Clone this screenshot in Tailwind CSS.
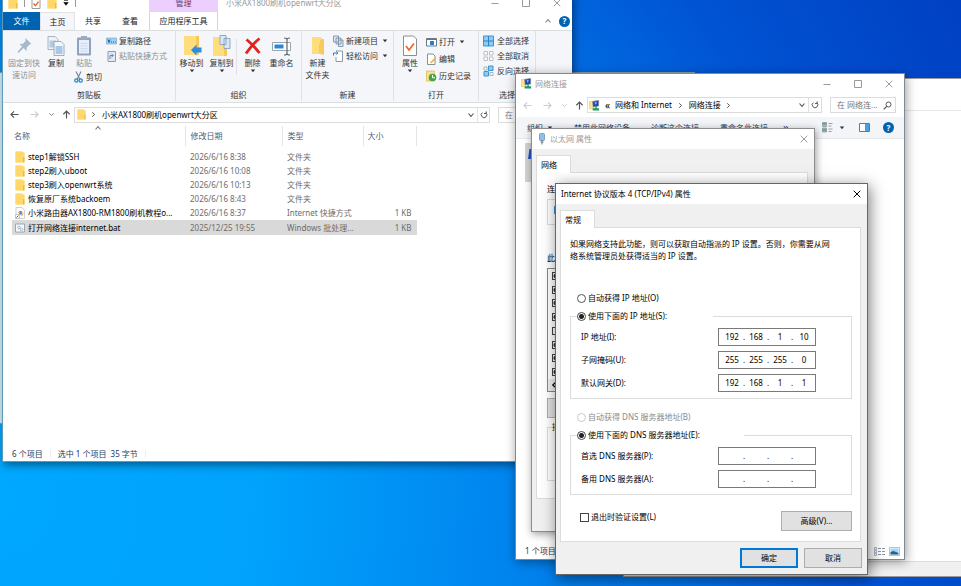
<!DOCTYPE html>
<html lang="zh-CN">
<head>
<meta charset="utf-8">
<meta name="viewport" content="width=device-width, initial-scale=1">
<title>网络连接</title>
<script src="https://cdn.jsdelivr.net/npm/@tailwindcss/browser@4"></script>
</head>
<body class="font-['Noto_Sans','Noto_Sans_CJK_SC',sans-serif] text-[8px] leading-[12px] text-black">

<!-- Shared icons -->
<svg class="hidden" aria-hidden="true">
  <symbol id="folder" viewBox="0 0 10 12"><path d="M0.5 0.5h6.5l1 1h1.5v10h-9z" fill="#ffe08a"/><path d="M7 0.5l1 1h1.5v4l-1.500 0v6h-7.500V0.500z" fill="#ffd76b"/><path d="M8 6h1.500v5.500h-1.500z" fill="#f2b93b"/></symbol>
  <symbol id="left" viewBox="0 0 10 10"><path d="M9.500 5H1.200M4.500 1.500L1 5l3.500 3.500" fill="none" stroke="currentColor" stroke-width="1.200"/></symbol>
  <symbol id="right" viewBox="0 0 10 10"><path d="M0.500 5h8.300M5.500 1.500L9 5 5.500 8.500" fill="none" stroke="currentColor" stroke-width="1.200"/></symbol>
  <symbol id="up" viewBox="0 0 10 10"><path d="M5 9.500V1.200M1.500 4.700L5 1.200l3.500 3.500" fill="none" stroke="currentColor" stroke-width="1.300"/></symbol>
  <symbol id="down" viewBox="0 0 8 8"><path d="M1.500 2.500L4 5.300l2.500-2.800" fill="none" stroke="currentColor" stroke-width="1.100"/></symbol>
  <symbol id="caret" viewBox="0 0 6 4"><path d="M0.800 0.500h4.400L3 3.300z" fill="currentColor"/></symbol>
  <symbol id="refresh" viewBox="0 0 10 10"><path d="M3 2a3.500 3.500 0 1 0 4.300.2M7.800 0.500v2.700H5" fill="none" stroke="currentColor" stroke-width="1.200"/></symbol>
  <symbol id="close" viewBox="0 0 8 8"><path d="M0.700 0.700l6.600 6.600M7.300 0.700L0.700 7.300" fill="none" stroke="currentColor" stroke-width="1"/></symbol>
  <symbol id="max" viewBox="0 0 8 8"><path d="M0.500 0.500h7v7h-7z" fill="none" stroke="currentColor"/></symbol>
  <symbol id="min" viewBox="0 0 8 8"><path d="M0.500 4.500h7" stroke="currentColor"/></symbol>
  <symbol id="net" viewBox="0 0 12 12"><path d="M0.500 1.500h5v8h-5z" fill="#ffe680" stroke="#d9bb4a" stroke-width=".5"/><path d="M4 1.500l6.500-1v6l-6 1z" fill="#2340b8" stroke="#7d8894" stroke-width=".8"/><path d="M6 2.500l2.500 0-1 3z" fill="#9fc4ff"/><path d="M7 7h1.500v2h2.500v2.500h-7V9h3z" fill="#1c9a63"/></symbol>
  <symbol id="copy" viewBox="0 0 18 21"><path d="M1 1h7l3 3v10H1z" fill="#eef3f8" stroke="#94a3b3" stroke-width=".8"/><path d="M2.500 5h6.500v7h-6.500z" fill="#b4cbe2"/><path d="M7 6h7l3 3v11H7z" fill="#f3f7fb" stroke="#8b9bab" stroke-width=".8"/><path d="M8.500 10.500h7v8h-7z" fill="#a9c8e8"/></symbol>
</svg>

<main class="relative h-screen w-full overflow-hidden bg-[radial-gradient(circle_at_0px_500px,#00a8ff_0px,#00a2fc_260px,#0088f0_480px,#0070e4_690px,#0054d4_850px,#0040c2_1080px)]">

  <!-- Windows at the back of the desktop -->
  <div class="absolute -left-2 top-[72px] h-[352px] w-[703px] border-t border-b border-[#8aa3ad] bg-[#d4ecf4]"></div>
  <div class="absolute top-[78px] -right-2 left-[623px] flex h-[499px] flex-col border border-[#9a9a9a] bg-white">
    <div class="h-8 border-b border-[#e6e6e6]"></div>
    <div class="flex-1"></div>
    <div class="h-[15px] border-t border-[#dcdcdc] bg-[#f0f0f0]"></div>
  </div>

  <!-- File explorer -->
  <section aria-label="文件资源管理器" class="absolute -top-[6px] left-[2px] flex h-[468px] w-[570px] flex-col border-b border-l border-[#5f9cbc] bg-white shadow-[2px_3px_8px_rgba(0,0,0,0.45)]">
    <header class="flex h-[18px] items-center text-[#9a9a9a]">
      <div class="flex w-[146px] items-center gap-[6px] pl-[5px]">
        <svg class="h-3 w-[10px]"><use href="#folder"/></svg>
        <span class="h-2 w-px bg-[#999]"></span>
        <svg class="h-3 w-[10px]" viewBox="0 0 10 12"><path d="M1 .5h8v11H1z" fill="#fff" stroke="#9a9a9a"/><path d="M2.500 6.500l2 2.200 3-4" fill="none" stroke="#e8642c" stroke-width="1.400"/></svg>
        <svg class="h-3 w-[10px]"><use href="#folder"/></svg>
        <svg class="h-[6px] w-[6px] text-black" viewBox="0 0 6 6"><path d="M1 .5h4M.8 2.500h4.400L3 5.300z" fill="currentColor" stroke="currentColor" stroke-width=".6"/></svg>
        <span class="h-2 w-px bg-[#999]"></span>
      </div>
      <div class="flex h-full w-[69px] items-center justify-center bg-[#eccffc] text-[#5f3d73]">管理</div>
      <h1 class="flex-1 pl-2">小米AX1800刷机openwrt大分区</h1>
      <button aria-label="最小化" class="flex w-[31px] justify-center"><svg class="h-2 w-2"><use href="#min"/></svg></button>
      <button aria-label="最大化" class="flex w-[31px] justify-center"><svg class="h-2 w-2"><use href="#max"/></svg></button>
      <button aria-label="关闭" class="flex w-[31px] justify-center"><svg class="h-2 w-2"><use href="#close"/></svg></button>
    </header>
    <nav class="flex h-[18px] items-stretch text-[#222]">
      <button class="w-[37px] bg-[#0063b1] text-white">文件</button>
      <button class="w-[35px] border-x border-t border-[#e1e3e5] bg-[#f4f6f9]">主页</button>
      <button class="w-9">共享</button>
      <button class="w-[38px]">查看</button>
      <button class="w-[69px] border-x border-[#d8d2dc]">应用程序工具</button>
      <span class="flex-1"></span>
      <button aria-label="折叠功能区" class="mr-[3px] flex w-4 items-center justify-center text-[#888]"><svg class="h-2 w-2 rotate-180"><use href="#down"/></svg></button>
      <button aria-label="帮助" class="mr-[2px] flex items-center"><span class="flex size-[11px] items-center justify-center rounded-full bg-[#0063b1] font-bold text-white">?</span></button>
    </nav>

    <!-- Ribbon -->
    <div class="flex h-[73px] border-y border-[#dcdfe2] bg-[#f4f6f9] pb-px text-[#333]">
      <div class="flex w-[173px] flex-col justify-between border-r border-[#dfe1e4]">
        <div class="flex pt-1 pl-[3px]">
          <button class="flex w-9 flex-col items-center text-[#8b8f94]"><svg class="h-[22px] w-[18px]" viewBox="0 0 18 22"><path d="M10.500 3l6 6-2 .6-2.700 2.900-.3 3.500-3-3L3.500 18l-1-1L7 11.500 4.500 9l3.600-.2L10.500 6z" fill="#a9b9cc"/></svg><span>固定到快<br>速访问</span></button>
          <button class="flex w-7 flex-col items-center"><svg class="h-[22px] w-[18px]"><use href="#copy"/></svg>复制</button>
          <div class="flex flex-col">
            <div class="flex">
              <button class="flex w-7 flex-col items-center text-[#8b8f94]"><svg class="h-[22px] w-[18px]" viewBox="0 0 18 22"><rect x="2" y="2.500" width="14" height="18" rx="1" fill="#8fa2c2"/><path d="M4 5h10v13.500H4z" fill="#e8effa"/><path d="M5.500 8.500h7M5.500 11h7M5.500 13.500h7M5.500 16h7" stroke="#c0d0e6" stroke-width=".7"/><path d="M6 1h6v3.500H6z" fill="#9eabc0"/></svg>粘贴</button>
              <div class="flex flex-col gap-[3px] pl-2">
                <button class="flex items-center gap-[2px]"><svg class="h-3 w-[11px]" viewBox="0 0 11 12"><path d="M.5 3h10v6H.5z" fill="#9fd0f3" stroke="#70a5cb" stroke-width=".6"/><path d="M2 4.500l1 3 1-3M5 7h1M7 7h1M9 7h.8" stroke="#175083" stroke-width=".9" fill="none"/></svg>复制路径</button>
                <button class="flex items-center gap-[2px] text-[#8b8f94]"><svg class="h-3 w-[11px]" viewBox="0 0 11 12"><path d="M2 1.500h7.500v10H2z" fill="#e4eaf4" stroke="#8b9cbb"/><path d="M4 9V5.500h3M5.500 4L7.500 5.500 5.500 7" fill="none" stroke="#7088b0"/></svg>粘贴快捷方式</button>
              </div>
            </div>
            <button class="flex items-center gap-[3px] pt-[2px] pl-1"><svg class="h-3 w-[9px]" viewBox="0 0 9 12"><path d="M2 .5l4 8M7 .5l-4 8" stroke="#718496" stroke-width="1.100"/><circle cx="2.300" cy="9.500" r="1.600" fill="none" stroke="#2786cf" stroke-width="1.300"/><circle cx="6.700" cy="9.500" r="1.600" fill="none" stroke="#2786cf" stroke-width="1.300"/></svg>剪切</button>
          </div>
        </div>
        <div class="text-center">剪贴板</div>
      </div>
      <div class="flex w-[126px] flex-col justify-between border-r border-[#dfe1e4]">
        <div class="flex pt-1">
          <button class="flex w-[31px] flex-col items-center"><svg class="h-[22px] w-5" viewBox="0 0 20 22"><path d="M2 1h15v19H2z" fill="#ffdc7c"/><path d="M14 1h3v19h-3z" fill="#f5c85a"/><path d="M19.500 12.500v5h-5v3L9 15l5.500-5.500v3z" fill="#2f8be0"/></svg>移动到<svg class="h-1 w-[6px]"><use href="#caret"/></svg></button>
          <button class="flex w-[29px] flex-col items-center"><svg class="h-[22px] w-5" viewBox="0 0 20 22"><path d="M1 2h14v19H1z" fill="#ffdc7c"/><path d="M12 2h3v19h-3z" fill="#f5c85a"/><path d="M8 .5h6v9H8zM12 3.500h6v10h-6z" fill="#d7e8f8" stroke="#8099b0" stroke-width=".8"/></svg>复制到<svg class="h-1 w-[6px]"><use href="#caret"/></svg></button>
          <span class="mt-1 h-9 w-px bg-[#dfe1e4]"></span>
          <button class="flex w-[31px] flex-col items-center"><svg class="h-[22px] w-5" viewBox="0 0 20 22"><path d="M3.500 4.500c5 4 9 8.500 13 13.500M16.500 3.500C12 7 7.500 12 3 18.500" fill="none" stroke="#e0231c" stroke-width="2.800"/></svg>删除<svg class="h-1 w-[6px]"><use href="#caret"/></svg></button>
          <button class="flex w-[27px] flex-col items-center"><svg class="h-[22px] w-5" viewBox="0 0 20 22"><path d="M.5 7.500h18v8H.5z" fill="#fff" stroke="#9aa5af"/><path d="M2.500 9.500h9v4h-9z" fill="#2b88d8"/><path d="M12 3c2 0 3 .4 3 1.500v14c0 1-1 1.500-3 1.500M18 3c-2 0-3 .4-3 1.500v14c0 1 1 1.500 3 1.500" fill="none" stroke="#5c6770" stroke-width="1.200"/></svg>重命名</button>
        </div>
        <div class="text-center">组织</div>
      </div>
      <div class="flex w-[92px] flex-col justify-between border-r border-[#dfe1e4]">
        <div class="flex pt-1">
          <button class="flex w-[31px] flex-col items-center"><svg class="h-[22px] w-4" viewBox="0 0 16 22"><path d="M2 2h9l1 2h2v16l-4-1H2z" fill="#ffdc7c"/><path d="M11 4h3v16l-5-2V10z" fill="#f6cb5c"/></svg><span>新建<br>文件夹</span></button>
          <div class="flex flex-col gap-[3px]">
            <button class="flex items-center gap-[2px]"><svg class="h-3 w-[11px]" viewBox="0 0 11 12"><path d="M.5 1h5v6h-5zM3 3h5v6H3zM5.500 5H10v6.500H5.500z" fill="#dbeaf7" stroke="#71879c" stroke-width=".8"/></svg>新建项目<svg class="ml-[2px] h-1 w-[6px]"><use href="#caret"/></svg></button>
            <button class="flex items-center gap-[2px]"><svg class="h-3 w-[11px]" viewBox="0 0 11 12"><path d="M3 1h6.500v10.500H3V7" fill="#fff" stroke="#7f8e9c" stroke-width=".9"/><path d="M.5 5.500V3h4M3.300 1.500L5 3 3.300 4.500" fill="none" stroke="#2480ca"/></svg>轻松访问<svg class="ml-[2px] h-1 w-[6px]"><use href="#caret"/></svg></button>
          </div>
        </div>
        <div class="text-center">新建</div>
      </div>
      <div class="flex w-[85px] flex-col justify-between border-r border-[#dfe1e4]">
        <div class="flex pt-1">
          <button class="flex w-8 flex-col items-center"><svg class="h-[22px] w-4" viewBox="0 0 16 22"><path d="M1.500 1h10l3 3v16.500h-13z" fill="#fff" stroke="#8a8f94"/><path d="M4 11l3 4 5-6.500" fill="none" stroke="#ee6c2b" stroke-width="1.800"/></svg>属性<svg class="h-1 w-[6px]"><use href="#caret"/></svg></button>
          <div class="flex flex-col gap-[5px] pt-px">
            <button class="flex items-center gap-[2px]"><svg class="h-3 w-[11px]" viewBox="0 0 11 12"><path d="M.5 2.500h10v7.500H.5z" fill="#fff" stroke="#6b7884"/><path d="M1 2.500h9v1.500H1z" fill="#6b7884"/><path d="M4 5h4v4H4z" fill="#2480ca"/></svg>打开<svg class="ml-[2px] h-1 w-[6px]"><use href="#caret"/></svg></button>
            <button class="flex items-center gap-[2px]"><svg class="h-3 w-[11px]" viewBox="0 0 11 12"><path d="M1.500 1h5.500l2 2v8.500H1.500z" fill="#fff" stroke="#8a8f94"/><path d="M4 9.500l5-5 1 1.500-5 4.500z" fill="#f3b13a"/></svg>编辑</button>
            <button class="flex items-center gap-[2px]"><svg class="h-3 w-[11px]" viewBox="0 0 11 12"><path d="M.5 1h8v10h-8z" fill="#ffe08a" stroke="#d7ac3c" stroke-width=".6"/><circle cx="6.500" cy="7.500" r="3.800" fill="#47a44b"/><path d="M6.500 5v2.700H9" fill="none" stroke="#fff"/></svg>历史记录</button>
          </div>
        </div>
        <div class="text-center">打开</div>
      </div>
      <div class="flex w-[57px] flex-col justify-between border-r border-[#dfe1e4]">
        <div class="flex flex-col gap-[3px] pt-1 pl-1">
          <button class="flex items-center gap-[3px]"><svg class="h-3 w-[11px]" viewBox="0 0 11 12"><path d="M.5 1h10v10H.5z" fill="#8dccf6" stroke="#3d94d0"/><path d="M5.500 1v10M.5 6h10" stroke="#2f83bf"/></svg>全部选择</button>
          <button class="flex items-center gap-[3px]"><svg class="h-3 w-[11px]" viewBox="0 0 11 12"><path d="M1 1.500h3.500V5H1zM6.500 1.500H10V5H6.500zM1 7h3.500v3.500H1zM6.500 7H10v3.500H6.500z" fill="#fff" stroke="#aab0b6" stroke-width=".8"/></svg>全部取消</button>
          <button class="flex items-center gap-[3px]"><svg class="h-3 w-[11px]" viewBox="0 0 11 12"><path d="M5.500 1H10v4.500H5.500zM1 6.500h4.500V11H1z" fill="#8dccf6" stroke="#3d94d0"/><path d="M1 2h3v3H1zM7 7.500h3v3H7z" fill="#fff" stroke="#8fa4b5" stroke-width=".8"/></svg>反向选择</button>
        </div>
        <div class="text-center">选择</div>
      </div>
    </div>

    <!-- Address bar -->
    <div class="flex h-[23px] items-center text-[#555]">
      <button aria-label="后退" class="flex w-[23px] justify-center"><svg class="size-[9px]"><use href="#left"/></svg></button>
      <button aria-label="前进" class="flex w-[17px] justify-center text-[#ccc]"><svg class="size-[9px]"><use href="#right"/></svg></button>
      <button aria-label="最近" class="flex w-4 justify-center text-[#888]"><svg class="size-[7px]"><use href="#down"/></svg></button>
      <button aria-label="上移" class="flex w-[15px] justify-center"><svg class="size-[9px]"><use href="#up"/></svg></button>
      <div class="flex h-4 w-[416px] items-center border border-[#dcdcdc] pl-[2px]">
        <svg class="h-[11px] w-[9px]"><use href="#folder"/></svg>
        <svg class="ml-1 size-[7px] -rotate-90"><use href="#down"/></svg>
        <span class="flex-1 pl-[5px] text-black">小米AX1800刷机openwrt大分区</span>
        <button aria-label="历史" class="flex w-3 justify-center"><svg class="size-2"><use href="#down"/></svg></button>
        <button aria-label="刷新" class="flex h-full w-3 items-center justify-center border-l border-[#e3e3e3]"><svg class="size-2"><use href="#refresh"/></svg></button>
      </div>
      <input aria-label="搜索" placeholder="在" class="ml-2 h-4 w-[68px] border border-[#dcdcdc] pl-[6px] placeholder:text-[#777]">
    </div>

    <div class="flex-1 pl-[9px]">
      <table class="w-[405px] table-fixed text-left text-[#6d6d6d]">
        <thead>
          <tr class="h-[20px] text-[#4c607a]">
            <th class="relative w-[173px] border-r border-[#e5e5e5] pl-[2px] font-normal">名称<svg class="absolute -top-[2px] left-[82px] size-2 rotate-180 text-[#777]"><use href="#down"/></svg></th>
            <th class="w-[97px] border-r border-[#e5e5e5] pl-[5px] font-normal">修改日期</th>
            <th class="w-[81px] border-r border-[#e5e5e5] pl-[5px] font-normal">类型</th>
            <th class="border-r border-[#e5e5e5] pl-1 font-normal">大小</th>
          </tr>
        </thead>
        <tbody>
          <tr class="h-1"><td colspan="4"></td></tr>
          <tr class="h-[14px]"><td class="text-black"><div class="flex items-center gap-[3px] pl-[3px]"><svg class="h-3 w-[10px]"><use href="#folder"/></svg>step1解锁SSH</div></td><td class="pl-[5px]">2026/6/16 8:38</td><td class="pl-[5px]">文件夹</td><td></td></tr>
          <tr class="h-[14px]"><td class="text-black"><div class="flex items-center gap-[3px] pl-[3px]"><svg class="h-3 w-[10px]"><use href="#folder"/></svg>step2刷入uboot</div></td><td class="pl-[5px]">2026/6/16 10:08</td><td class="pl-[5px]">文件夹</td><td></td></tr>
          <tr class="h-[14px]"><td class="text-black"><div class="flex items-center gap-[3px] pl-[3px]"><svg class="h-3 w-[10px]"><use href="#folder"/></svg>step3刷入openwrt系统</div></td><td class="pl-[5px]">2026/6/16 10:13</td><td class="pl-[5px]">文件夹</td><td></td></tr>
          <tr class="h-[14px]"><td class="text-black"><div class="flex items-center gap-[3px] pl-[3px]"><svg class="h-3 w-[10px]"><use href="#folder"/></svg>恢复原厂系统backoem</div></td><td class="pl-[5px]">2026/6/16 8:43</td><td class="pl-[5px]">文件夹</td><td></td></tr>
          <tr class="h-[14px]"><td class="text-black"><div class="flex items-center gap-[3px] pl-[3px]"><svg class="h-3 w-[10px]" viewBox="0 0 10 12"><path d="M1 .5h6l2.500 2.500v8.500H1z" fill="#fff" stroke="#bbb" stroke-width=".7"/><path d="M3 5.500A2.800 2.800 0 0 1 8 5.500z" fill="#e5482c"/><path d="M8.200 5.500a2.700 2.700 0 0 1-2.500 3.800z" fill="#f2b52c"/><circle cx="5.600" cy="6.500" r="1.300" fill="#3b82e0"/><path d="M.5 7.500h4V11.500h-4z" fill="#fff" stroke="#999" stroke-width=".5"/><path d="M1.500 10.500L3.500 8.500" stroke="#2062c8"/></svg>小米路由器AX1800-RM1800刷机教程o...</div></td><td class="pl-[5px]">2026/6/16 8:37</td><td class="pl-[5px]">Internet 快捷方式</td><td class="pr-[5px] text-right">1 KB</td></tr>
          <tr class="h-[15px] bg-[#d9d9d9]"><td class="text-black"><div class="flex items-center gap-[3px] pl-[3px]"><svg class="h-3 w-[10px]" viewBox="0 0 10 12"><path d="M.5 2h9v8h-9z" fill="#f5f8fa" stroke="#8b98a4" stroke-width=".8"/><circle cx="4" cy="5.500" r="1.300" fill="none" stroke="#a9b8c6"/><circle cx="6.500" cy="7.500" r="1.300" fill="none" stroke="#a9b8c6"/></svg>打开网络连接internet.bat</div></td><td class="pl-[5px]">2025/12/25 19:55</td><td class="pl-[5px]">Windows 批处理...</td><td class="pr-[5px] text-right">1 KB</td></tr>
        </tbody>
      </table>
    </div>
    <footer class="flex h-[15px] items-center gap-[7px] pl-[9px] text-[#24405e]"><span>6 个项目</span><span class="h-2 w-px bg-[#eee]"></span><span>选中 1 个项目&nbsp; 35 字节</span><span class="h-2 w-px bg-[#eee]"></span></footer>
  </section>

  <!-- Network connections -->
  <section aria-label="网络连接" class="absolute top-[73px] left-[515px] flex h-[487px] w-[390px] flex-col border border-[#7d8a94] bg-white shadow-[1px_2px_10px_rgba(0,0,0,0.4)]">
    <header class="flex h-[19px] items-center text-[#999]">
      <svg class="ml-[5px] size-[11px]"><use href="#net"/></svg>
      <h2 class="flex-1 pl-[3px]">网络连接</h2>
      <button aria-label="最小化" class="flex w-[30px] justify-center"><svg class="h-2 w-2"><use href="#min"/></svg></button>
      <button aria-label="最大化" class="flex w-[31px] justify-center"><svg class="h-2 w-2"><use href="#max"/></svg></button>
      <button aria-label="关闭" class="flex w-[31px] justify-center"><svg class="h-2 w-2"><use href="#close"/></svg></button>
    </header>
    <div class="flex h-[24px] items-center pr-2 text-[#555]">
      <button aria-label="后退" class="flex w-[23px] justify-center text-[#ccc]"><svg class="size-[9px]"><use href="#left"/></svg></button>
      <button aria-label="前进" class="flex w-[17px] justify-center text-[#ccc]"><svg class="size-[9px]"><use href="#right"/></svg></button>
      <button aria-label="最近" class="flex w-4 justify-center text-[#ccc]"><svg class="size-[7px]"><use href="#down"/></svg></button>
      <button aria-label="上移" class="flex w-[15px] justify-center"><svg class="size-[9px]"><use href="#up"/></svg></button>
      <div class="flex h-4 flex-1 items-center border border-[#dcdcdc] pl-px">
        <svg class="size-[11px]"><use href="#net"/></svg>
        <span class="w-[15px] text-center text-[10px] text-black">«</span>
        <span class="text-black">网络和 Internet</span><svg class="mx-[5px] size-[7px] -rotate-90"><use href="#down"/></svg>
        <span class="text-black">网络连接</span><svg class="mx-1 size-[7px] -rotate-90"><use href="#down"/></svg>
        <span class="flex-1"></span>
        <button aria-label="历史" class="flex w-[13px] justify-center"><svg class="size-2"><use href="#down"/></svg></button>
        <button aria-label="刷新" class="flex h-full w-[13px] items-center justify-center border-l border-[#e3e3e3]"><svg class="size-2"><use href="#refresh"/></svg></button>
      </div>
      <label class="ml-2 flex h-4 w-[66px] items-center border border-[#dcdcdc] pl-[6px]"><input aria-label="搜索" placeholder="在 网络连..." class="w-[46px] placeholder:text-[#777]"><svg class="size-[9px]" viewBox="0 0 9 9"><circle cx="5.500" cy="3.500" r="2.500" fill="none" stroke="#555"/><path d="M3.700 5.300L.7 8.300" stroke="#555" stroke-width="1.200"/></svg></label>
    </div>
    <div class="flex h-[22px] items-center border-b border-[#e4e7ea] bg-[#f3f5f8] pl-[11px] text-[#1e395b]">
      <button class="flex items-center gap-1">组织<svg class="h-1 w-[6px]"><use href="#caret"/></svg></button>
      <button class="ml-[21px]">禁用此网络设备</button>
      <button class="ml-[21px]">诊断这个连接</button>
      <button class="ml-[21px]">重命名此连接</button>
      <button class="ml-[15px] text-[12px]">»</button>
      <span class="flex-1"></span>
      <button aria-label="更改视图" class="flex items-center gap-[6px]"><svg class="size-[11px]" viewBox="0 0 11 11"><path d="M.5.500h4v4h-4zM.5 6h4v4h-4z" fill="#9fd0a0" stroke="#7d8b98" stroke-width=".7"/><path d="M1 2h3M1 8h3" stroke="#3a76b4"/><path d="M6.500 1.500h4M6.500 4h3M6.500 7h4M6.500 9.500h3" stroke="#8a97a3" stroke-width=".9"/></svg><svg class="h-1 w-[6px]"><use href="#caret"/></svg></button>
      <button aria-label="预览窗格" class="ml-[14px]"><svg class="h-[9px] w-[11px]" viewBox="0 0 11 9"><path d="M.5.500h10v8H.5z" fill="#fff" stroke="#6a7885"/><path d="M6 1h4v7H6z" fill="#4a9fe0"/></svg></button>
      <button aria-label="帮助" class="mr-[10px] ml-[13px] flex size-[11px] items-center justify-center rounded-full bg-[#0063b1] font-bold text-white">?</button>
    </div>
    <div class="flex-1 pt-[4px] pl-[9px]">
      <div class="h-[39px] w-20 bg-[#d4d4d4] pt-[6px] pl-[3px]"><svg class="h-3 w-4" viewBox="0 0 16 12"><path d="M1.500 0h12v10H0z" fill="#2450c8"/></svg></div>
    </div>
    <footer class="flex h-4 items-center gap-1 pr-1 pl-[9px] text-[#24405e]"><span class="flex-1">1 个项目</span>
      <button aria-label="详细信息"><svg class="h-[9px] w-[11px]" viewBox="0 0 11 9"><path d="M.5.500h2v2h-2zM.5 3.500h2v2h-2zM.5 6.500h2v2h-2z" fill="none" stroke="#8a97a3" stroke-width=".7"/><path d="M4 1.500h3M8 1.500h3M4 4.500h3M8 4.500h3M4 7.500h3M8 7.500h3" stroke="#8a97a3"/></svg></button>
      <button aria-label="大图标" class="border border-[#9ccbe8] bg-white"><svg class="h-[7px] w-[9px]" viewBox="0 0 9 7"><path d="M.5.500h8v6h-8z" fill="#9fd4f5"/><path d="M.5 6.500V4l3-1 5 2v1.500z" fill="#24638c"/></svg></button>
    </footer>
  </section>

  <!-- Ethernet properties -->
  <section aria-label="以太网 属性" class="absolute top-[128px] left-[531px] flex h-[404px] w-[284px] flex-col border border-[#8d8d8d] bg-[#f0f0f0] shadow-[1px_2px_8px_rgba(0,0,0,0.4)]">
    <header class="flex h-5 items-center bg-white text-[#999]">
      <svg class="ml-[6px] h-3 w-2" viewBox="0 0 8 12"><rect x="1.500" y=".5" width="5" height="7" rx="1" fill="#8ec1e8" stroke="#5d88a8" stroke-width=".7"/><path d="M4 7v4.500M2.500 9h3" stroke="#6d7c88"/></svg>
      <h2 class="flex-1 pl-1">以太网 属性</h2>
      <button aria-label="关闭" class="mr-[6px]"><svg class="h-2 w-2"><use href="#close"/></svg></button>
    </header>
    <div class="flex flex-1 flex-col pt-[6px] pr-[6px] pb-8 pl-1">
      <button class="z-10 -mb-px h-[18px] w-[35px] border border-b-0 border-[#dcdcdc] bg-white pl-1 text-left">网络</button>
      <div class="flex flex-1 flex-col border border-[#dcdcdc] bg-white px-[10px] pt-[10px]">
        <div>连</div>
        <div class="mt-1 h-[26px] shrink-0 border border-[#dcdcdc] pt-[6px] pl-[6px]"><div class="h-2 w-2 bg-[#398ec4]"></div></div>
        <div class="mt-[27px]">此</div>
        <div class="mt-1 flex h-[124px] shrink-0 flex-col border border-[#888] pl-1">
          <div class="flex flex-1 flex-col justify-around">
            <input type="checkbox" aria-label="项目 1" checked class="size-2 appearance-none border border-[#444] bg-white checked:bg-[radial-gradient(circle,#333_0_2px,#fff_3px)]">
            <input type="checkbox" aria-label="项目 2" checked class="size-2 appearance-none border border-[#444] bg-white checked:bg-[radial-gradient(circle,#333_0_2px,#fff_3px)]">
            <input type="checkbox" aria-label="项目 3" checked class="size-2 appearance-none border border-[#444] bg-white checked:bg-[radial-gradient(circle,#333_0_2px,#fff_3px)]">
            <input type="checkbox" aria-label="项目 4" checked class="size-2 appearance-none border border-[#444] bg-white checked:bg-[radial-gradient(circle,#333_0_2px,#fff_3px)]">
            <input type="checkbox" aria-label="项目 5" class="size-2 appearance-none border border-[#444] bg-white checked:bg-[radial-gradient(circle,#333_0_2px,#fff_3px)]">
            <input type="checkbox" aria-label="项目 6" checked class="size-2 appearance-none border border-[#444] bg-white checked:bg-[radial-gradient(circle,#333_0_2px,#fff_3px)]">
            <input type="checkbox" aria-label="项目 7" checked class="size-2 appearance-none border border-[#444] bg-white checked:bg-[radial-gradient(circle,#333_0_2px,#fff_3px)]">
            <input type="checkbox" aria-label="项目 8" checked class="size-2 appearance-none border border-[#444] bg-white checked:bg-[radial-gradient(circle,#333_0_2px,#fff_3px)]">
          </div>
          <div class="-ml-1 h-3 bg-[#eee] pt-[2px] pl-[2px]"><svg class="size-2 rotate-90"><use href="#down"/></svg></div>
        </div>
        <button aria-label="安装" class="mt-[6px] h-5 w-16 shrink-0 border border-[#adadad] bg-[#e1e1e1]"></button>
        <fieldset class="mt-[3px] h-[60px] border border-[#dcdcdc]"><legend class="ml-1">描</legend></fieldset>
      </div>
    </div>
  </section>

  <!-- IPv4 properties -->
  <form aria-label="Internet 协议版本 4 (TCP/IPv4) 属性" class="absolute top-[183px] left-[555px] flex h-[392px] w-[313px] flex-col border border-[#666] bg-[#f0f0f0] shadow-[2px_3px_14px_rgba(0,0,0,0.5)]">
    <header class="flex h-[20px] shrink-0 items-center bg-white pr-[6px] pl-[5px]">
      <h2 class="flex-1">Internet 协议版本 4 (TCP/IPv4) 属性</h2>
      <button type="button" aria-label="关闭"><svg class="h-2 w-2"><use href="#close"/></svg></button>
    </header>
    <div class="flex flex-1 flex-col pt-[6px] pr-[6px] pl-1">
      <button type="button" class="z-10 -mb-px h-[18px] w-[35px] border border-b-0 border-[#dcdcdc] bg-white pl-1 text-left">常规</button>
      <div class="flex flex-1 flex-col border border-[#dcdcdc] bg-white pt-[10px] pr-2 pl-[9px]">
        <p>如果网络支持此功能，则可以获取自动指派的 IP 设置。否则，你需要从网<br>络系统管理员处获得适当的 IP 设置。</p>

        <label class="mt-[30px] ml-[7px] flex items-center gap-[2px]"><input type="radio" name="ip" class="size-[9px] appearance-none rounded-full border border-[#555] bg-white">自动获得 IP 地址(O)</label>
        <fieldset class="mt-[6px] border border-[#dcdcdc] pb-[6px] pl-[10px]">
          <legend class="-ml-1 w-[136px]"><label class="flex items-center gap-[2px]"><input type="radio" name="ip" checked class="size-[9px] appearance-none rounded-full border border-[#444] bg-[radial-gradient(circle,#222_0_2px,#fff_3px)]">使用下面的 IP 地址(S):</label></legend>
          <div class="flex flex-col gap-[5px] pt-[6px]">
            <div class="flex items-center"><label for="ip1" class="w-[137px]">IP 地址(I):</label>
              <div class="flex h-[18px] w-[98px] items-center border border-[#7a7a7a] pl-[3px]"><input id="ip1" value="192" class="w-5 text-center"><span class="w-1 text-center">.</span><input aria-label="IP 2" value="168" class="w-5 text-center"><span class="w-1 text-center">.</span><input aria-label="IP 3" value="1" class="w-5 text-center"><span class="w-1 text-center">.</span><input aria-label="IP 4" value="10" class="w-5 text-center"></div></div>
            <div class="flex items-center"><label for="mask1" class="w-[137px]">子网掩码(U):</label>
              <div class="flex h-[18px] w-[98px] items-center border border-[#7a7a7a] pl-[3px]"><input id="mask1" value="255" class="w-5 text-center"><span class="w-1 text-center">.</span><input aria-label="掩码 2" value="255" class="w-5 text-center"><span class="w-1 text-center">.</span><input aria-label="掩码 3" value="255" class="w-5 text-center"><span class="w-1 text-center">.</span><input aria-label="掩码 4" value="0" class="w-5 text-center"></div></div>
            <div class="flex items-center"><label for="gw1" class="w-[137px]">默认网关(D):</label>
              <div class="flex h-[18px] w-[98px] items-center border border-[#7a7a7a] pl-[3px]"><input id="gw1" value="192" class="w-5 text-center"><span class="w-1 text-center">.</span><input aria-label="网关 2" value="168" class="w-5 text-center"><span class="w-1 text-center">.</span><input aria-label="网关 3" value="1" class="w-5 text-center"><span class="w-1 text-center">.</span><input aria-label="网关 4" value="1" class="w-5 text-center"></div></div>
          </div>
        </fieldset>

        <label class="mt-[12px] ml-[7px] flex items-center gap-[2px] text-[#8a8a8a]"><input type="radio" name="dns" disabled class="size-[9px] appearance-none rounded-full border border-[#c8c8c8] bg-white">自动获得 DNS 服务器地址(B)</label>
        <fieldset class="mt-[6px] border border-[#dcdcdc] pb-[6px] pl-[10px]">
          <legend class="-ml-1 w-[167px]"><label class="flex items-center gap-[2px]"><input type="radio" name="dns" checked class="size-[9px] appearance-none rounded-full border border-[#444] bg-[radial-gradient(circle,#222_0_2px,#fff_3px)]">使用下面的 DNS 服务器地址(E):</label></legend>
          <div class="flex flex-col gap-[5px] pt-[6px]">
            <div class="flex items-center"><label for="dns1" class="w-[137px]">首选 DNS 服务器(P):</label>
              <div class="flex h-[18px] w-[98px] items-center border border-[#7a7a7a] pl-[3px]"><input id="dns1" class="w-5 text-center"><span class="w-1 text-center">.</span><input aria-label="首选 2" class="w-5 text-center"><span class="w-1 text-center">.</span><input aria-label="首选 3" class="w-5 text-center"><span class="w-1 text-center">.</span><input aria-label="首选 4" class="w-5 text-center"></div></div>
            <div class="flex items-center"><label for="dns2" class="w-[137px]">备用 DNS 服务器(A):</label>
              <div class="flex h-[18px] w-[98px] items-center border border-[#7a7a7a] pl-[3px]"><input id="dns2" class="w-5 text-center"><span class="w-1 text-center">.</span><input aria-label="备用 2" class="w-5 text-center"><span class="w-1 text-center">.</span><input aria-label="备用 3" class="w-5 text-center"><span class="w-1 text-center">.</span><input aria-label="备用 4" class="w-5 text-center"></div></div>
          </div>
        </fieldset>

        <div class="mt-[16px] flex items-start justify-between">
          <label class="ml-[10px] flex items-center gap-[2px]"><input type="checkbox" class="size-[9px] appearance-none border border-[#444] bg-white">退出时验证设置(L)</label>
          <button type="button" class="h-5 w-[71px] border border-[#adadad] bg-[#e1e1e1]">高级(V)...</button>
        </div>
      </div>
    </div>
    <footer class="flex h-8 shrink-0 items-start justify-end gap-[6px] pt-[6px] pr-[5px]">
      <button type="submit" class="h-5 w-[58px] border-2 border-[#0078d7] bg-[#e1e1e1]">确定</button>
      <button type="button" class="h-5 w-[58px] border border-[#adadad] bg-[#e1e1e1]">取消</button>
    </footer>
  </form>
</main>
</body>
</html>
